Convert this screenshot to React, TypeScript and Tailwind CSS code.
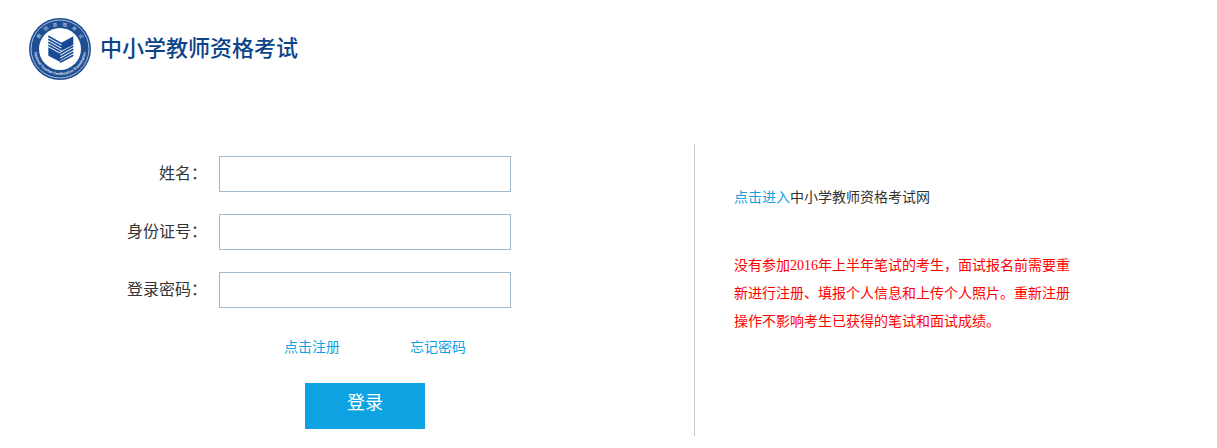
import React, { useState } from 'react';

const FIELDS = [
  { id: 'name', label: '姓名：', type: 'text' },
  { id: 'idNumber', label: '身份证号：', type: 'text' },
  { id: 'password', label: '登录密码：', type: 'password' },
];

const Emblem: React.FC = () => (
  <svg viewBox="0 0 186 186" className="size-[62px] shrink-0" aria-hidden="true">
    <defs>
      <path id="arc-top" d="M 24 93 A 69 69 0 0 1 162 93" />
      <path id="arc-bottom" d="M 15 93 A 78 78 0 0 0 171 93" />
    </defs>

    {/* Rings */}
    <circle cx="93" cy="93" r="93" fill="#1f4f93" />
    <circle cx="93" cy="93" r="87" fill="none" stroke="#a9bedb" strokeWidth="3" />
    <circle cx="93" cy="93" r="63" fill="#ffffff" />

    {/* Lettering */}
    <text fill="#c9d7ea" fontSize="14" className="font-['Noto_Sans_CJK_SC',sans-serif]">
      <textPath href="#arc-top" startOffset="50%" textAnchor="middle">
        教　师　资　格　考　试
      </textPath>
    </text>
    <text fill="#e6edf6" fontSize="11" fontWeight="bold" className="font-['Liberation_Sans',sans-serif]">
      <textPath href="#arc-bottom" startOffset="50%" textAnchor="middle">
        National Teacher Certification Examination
      </textPath>
    </text>

    {/* Open book */}
    <g fill="#164a94">
      <path d="M97 74 L133 55 V80 L97 99 Z" />
      <path d="M58 88 L94 107 V132 L58 113 Z" />
    </g>
    <g stroke="#164a94" strokeWidth="5">
      <path d="M58 55 L98 77" />
      <path d="M58 64 L98 86" />
      <path d="M58 73 L98 95" />
      <path d="M58 82 L94 101" />
      <path d="M133 85 L93 107" />
      <path d="M133 94 L93 116" />
      <path d="M133 103 L93 125" />
      <path d="M133 112 L93 133" />
    </g>
  </svg>
);

const LoginForm: React.FC = () => {
  const [values, setValues] = useState<Record<string, string>>({});

  return (
    <form className="w-[694px] shrink-0 pt-3" onSubmit={(e) => e.preventDefault()}>
      <div className="space-y-[22px]">
        {FIELDS.map((field) => (
          <div key={field.id} className="flex h-9 items-center gap-3">
            <label htmlFor={field.id} className="w-[207px] text-right text-base leading-8">
              {field.label}
            </label>
            <input
              id={field.id}
              type={field.type}
              value={values[field.id] ?? ''}
              onChange={(e) => setValues({ ...values, [field.id]: e.target.value })}
              className="h-9 w-[292px] border border-[#a5bacd] bg-white px-2 outline-none"
            />
          </div>
        ))}
      </div>

      <div className="ml-[219px] w-[292px]">
        <div className="mt-[26px] flex gap-[70px] pl-[65px] text-sm leading-7 text-[#0fa2e2]">
          <a href="#register">点击注册</a>
          <a href="#forgot">忘记密码</a>
        </div>
        <button
          type="submit"
          className="mx-auto mt-[21px] block h-[46px] w-[120px] cursor-pointer bg-[#0fa2e2] pb-1.5 text-lg text-white"
        >
          登录
        </button>
      </div>
    </form>
  );
};

const Notice: React.FC = () => (
  <aside className="min-h-[292px] flex-1 border-l border-[#cccccc] pt-10 pl-[39px] text-sm leading-7">
    <p>
      <a href="#home" className="text-[#0fa2e2]">点击进入</a>中小学教师资格考试网
    </p>
    <p className="mt-10 max-w-[340px] text-[#ff0000]">
      没有参加2016年上半年笔试的考生，面试报名前需要重新进行注册、填报个人信息和上传个人照片。重新注册操作不影响考生已获得的笔试和面试成绩。
    </p>
  </aside>
);

const App: React.FC = () => {
  return (
    <div className="w-full bg-white text-[#333333] font-['Liberation_Serif','Noto_Sans_CJK_SC',sans-serif]">
      <header className="flex items-center gap-[9px] pt-[18px] pl-[29px]">
        <Emblem />
        <h1 className="text-[22px] font-medium leading-8 text-[#0d4489]">中小学教师资格考试</h1>
      </header>

      <main className="mt-16 flex">
        <LoginForm />
        <Notice />
      </main>
    </div>
  );
};

export default App;
